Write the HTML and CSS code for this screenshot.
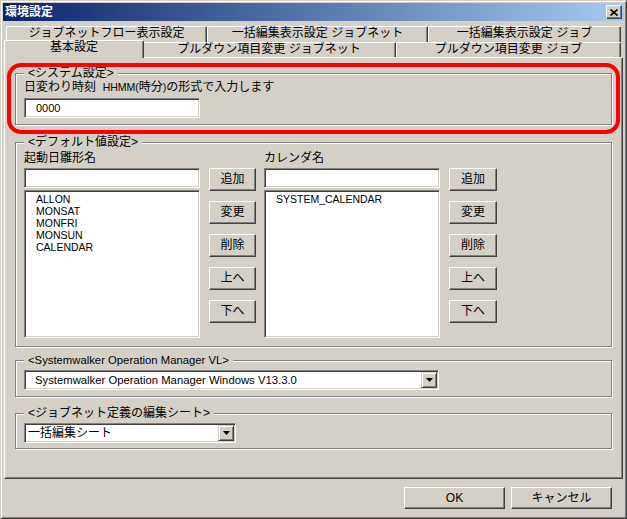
FILE: index.html
```html
<!DOCTYPE html>
<html lang="ja">
<head>
  <meta charset="UTF-8">
  <title>環境設定</title>
  <link rel="stylesheet" href="styles.css">
</head>
<body>
<div class="window">
  <div class="titlebar">
    <span class="title">環境設定</span>
    <span class="close">
      <svg width="8" height="7" viewBox="0 0 8 7"><path d="M0.5 0.5 L7.5 6.5 M7.5 0.5 L0.5 6.5" stroke="#000" stroke-width="1.6" fill="none"/></svg>
    </span>
  </div>

  <div class="tabs">
    <div class="tabrow back">
      <div class="tab w1">ジョブネットフロー表示設定</div>
      <div class="tab w2">一括編集表示設定 ジョブネット</div>
      <div class="tab w3">一括編集表示設定 ジョブ</div>
    </div>
    <div class="tabrow front">
      <div class="tab cur">基本設定</div>
      <div class="tab w5">プルダウン項目変更 ジョブネット</div>
      <div class="tab w6">プルダウン項目変更 ジョブ</div>
    </div>
  </div>

  <div class="panel">
    <div class="mark"></div>

    <fieldset class="group g-sys">
      <legend>&lt;システム設定&gt;</legend>
      <div class="cap">日変わり時刻&nbsp; <span class="en">HHMM(</span>時分<span class="en">)</span>の形式で入力します</div>
      <div class="field edit num">0000</div>
    </fieldset>

    <fieldset class="group g-def">
      <legend>&lt;デフォルト値設定&gt;</legend>
      <div class="lists">
        <div class="col">
          <div class="cap">起動日雛形名</div>
          <div class="field edit"></div>
          <div class="field listbox">
            <div>ALLON</div>
            <div>MONSAT</div>
            <div>MONFRI</div>
            <div>MONSUN</div>
            <div>CALENDAR</div>
          </div>
        </div>
        <div class="btns">
          <div class="btn">追加</div>
          <div class="btn">変更</div>
          <div class="btn">削除</div>
          <div class="btn">上へ</div>
          <div class="btn">下へ</div>
        </div>
        <div class="col col2">
          <div class="cap">カレンダ名</div>
          <div class="field edit"></div>
          <div class="field listbox">
            <div>SYSTEM_CALENDAR</div>
          </div>
        </div>
        <div class="btns btns2">
          <div class="btn">追加</div>
          <div class="btn">変更</div>
          <div class="btn">削除</div>
          <div class="btn">上へ</div>
          <div class="btn">下へ</div>
        </div>
      </div>
    </fieldset>

    <fieldset class="group g-vl">
      <legend class="lat">&lt;Systemwalker Operation Manager VL&gt;</legend>
      <div class="field combo combo-vl">
        <span class="val lat">Systemwalker Operation Manager Windows V13.3.0</span>
        <span class="drop"><svg width="7" height="4" viewBox="0 0 7 4"><path d="M0 0 H7 L3.5 4 Z" fill="#000"/></svg></span>
      </div>
    </fieldset>

    <fieldset class="group g-sheet">
      <legend>&lt;ジョブネット定義の編集シート&gt;</legend>
      <div class="field combo combo-sheet">
        <span class="val">一括編集シート</span>
        <span class="drop"><svg width="7" height="4" viewBox="0 0 7 4"><path d="M0 0 H7 L3.5 4 Z" fill="#000"/></svg></span>
      </div>
    </fieldset>
  </div>

  <div class="footer">
    <div class="btn wide">OK</div>
    <div class="btn wide">キャンセル</div>
  </div>
</div>
</body>
</html>
```

FILE: styles.css
```css
*{
  margin: 0;
  padding: 0;
  box-sizing: border-box;
}
body{
  background: #d4d0c8;
  font: 12px/13px "Liberation Sans", "Noto Sans CJK JP", sans-serif;
  color: #000;
}
.window{
  width: 627px;
  height: 519px;
  padding: 2px;
  background: #d4d0c8;
  border: 1px solid;
  border-color: #d4d0c8 #404040 #404040 #d4d0c8;
  box-shadow: inset 1px 1px #fff, inset -1px -1px #808080;
}

/* latin runs are narrower in the original ui font */
.en{
  font-size: 10.5px;
}
.lat{
  font-size: 11.3px;
}

/* title */
.titlebar{
  height: 18px;
  display: flex;
  align-items: center;
  justify-content: space-between;
  padding: 0 2px;
  background: linear-gradient(to right, #0a246a, #a6caf0);
}
.title{
  color: #fff;
  font-weight: bold;
  line-height: 18px;
}
.close{
  width: 16px;
  height: 14px;
  display: flex;
  align-items: center;
  justify-content: center;
  background: #d4d0c8;
  border: 1px solid;
  border-color: #fff #404040 #404040 #fff;
  box-shadow: inset -1px -1px #808080;
}
.close svg{
  display: block;
}

/* tabs */
.tabs{
  margin: 5px 0 0 3px;
}
.tabrow{
  display: flex;
  align-items: flex-start;
}
.back{
  height: 16px;
}
.front{
  height: 15px;
}
.tab{
  height: 100%;
  background: #d4d0c8;
  border-top: 1px solid #fff;
  border-left: 1px solid #fff;
  border-right: 1px solid #404040;
  box-shadow: inset -1px 0 #808080;
  border-radius: 2px 2px 0 0;
  text-align: center;
  white-space: nowrap;
  line-height: 13px;
}
.w1{ width: 201px; }
.w2{ width: 221px; }
.w3{ width: 193px; }
.w5{ width: 254px; }
.w6{ width: 225px; }
.cur{
  position: relative;
  z-index: 2;
  width: 140px;
  height: 18px;
  margin: -2px -2px 0 -2px;
}

/* page */
.panel{
  position: relative;
  width: 619px;
  height: 422px;
  margin-left: 1px;
  padding: 9px 0 0 10px;
  border: 1px solid;
  border-color: #fff #404040 #404040 #fff;
  box-shadow: inset -1px -1px #808080;
}
.mark{
  position: absolute;
  left: 2px;
  top: 5px;
  width: 613px;
  height: 71px;
  border: 4px solid #f00;
  border-radius: 14px;
  z-index: 3;
  pointer-events: none;
}

.group{
  width: 597px;
  border: 1px solid #808080;
  box-shadow: inset 1px 1px #fff, 1px 1px #fff;
  padding: 0 8px 6px;
}
.group legend{
  padding: 0 4px;
  line-height: 12px;
  background: #d4d0c8;
}
.g-sys{
  padding-top: 2px;
}
.g-def{
  margin-top: 11px;
  padding-top: 4px;
  padding-bottom: 8px;
}
.g-vl{
  margin-top: 7px;
  padding-top: 4px;
}
.g-sheet{
  margin-top: 10px;
  padding-top: 4px;
  padding-bottom: 5px;
}

.cap{
  white-space: nowrap;
}

/* sunken controls */
.field{
  background: #fff;
  border: 1px solid;
  border-color: #808080 #fff #fff #808080;
  box-shadow: inset 1px 1px #404040, inset -1px -1px #d4d0c8;
}
.edit{
  width: 176px;
  height: 20px;
  padding-left: 11px;
  line-height: 18px;
}
.num{
  font-size: 11px;
}
.g-sys .edit{
  margin-top: 4px;
}

.lists{
  display: flex;
  align-items: flex-start;
}
.col{
  width: 176px;
}
.col .edit{
  margin-top: 3px;
}
.col2{
  margin-left: 8px;
}
.listbox{
  height: 148px;
  margin-top: 2px;
  padding: 2px 0 0 11px;
  font-size: 10.5px;
  line-height: 12px;
}
.btns{
  width: 47px;
  margin: 16px 0 0 9px;
  display: flex;
  flex-direction: column;
  gap: 10px;
}
.btns2{
  width: 48px;
}

/* raised buttons */
.btn{
  height: 23px;
  background: #d4d0c8;
  border: 1px solid;
  border-color: #fff #404040 #404040 #fff;
  box-shadow: inset -1px -1px #808080;
  text-align: center;
  line-height: 21px;
  white-space: nowrap;
}

.combo{
  height: 20px;
  display: flex;
  align-items: center;
  padding: 1px;
}
.combo .val{
  flex: 1;
  line-height: 18px;
  white-space: nowrap;
}
.combo-vl{
  width: 415px;
}
.combo-vl .val{
  padding-left: 9px;
}
.combo-sheet{
  width: 212px;
}
.combo-sheet .val{
  padding-left: 2px;
}
.drop{
  width: 16px;
  height: 16px;
  display: flex;
  align-items: center;
  justify-content: center;
  background: #d4d0c8;
  border: 1px solid;
  border-color: #d4d0c8 #404040 #404040 #d4d0c8;
  box-shadow: inset 1px 1px #fff, inset -1px -1px #808080;
}
.drop svg{
  display: block;
}

/* bottom */
.footer{
  display: flex;
  justify-content: flex-end;
  gap: 6px;
  margin-top: 8px;
  padding-right: 12px;
}
.wide{
  width: 101px;
  height: 22px;
  line-height: 20px;
}
```
